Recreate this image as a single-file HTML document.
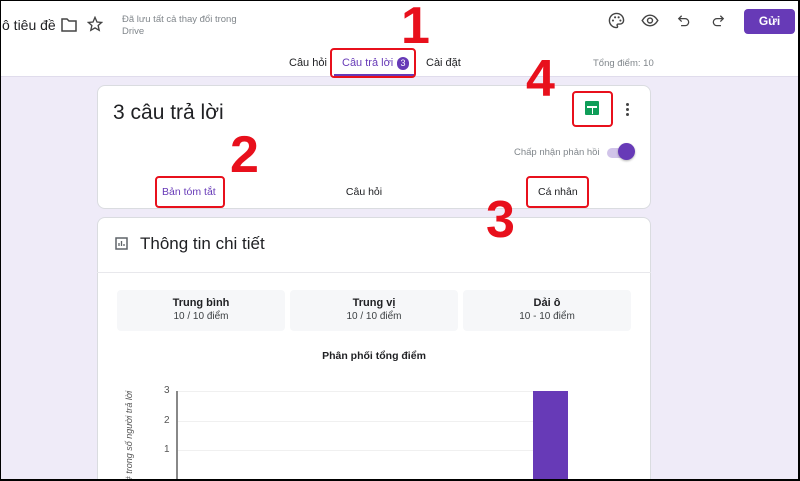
<!DOCTYPE html>
<html><head><meta charset="utf-8"><style>
*{margin:0;padding:0;box-sizing:border-box}
html{width:800px;height:481px;overflow:hidden}
body{width:800px;height:481px;overflow:hidden;position:relative;background:#efebf8;font-family:"Liberation Sans","Noto Sans CJK SC",sans-serif;color:#202124}
.a{position:absolute}
.hdr{left:0;top:0;width:800px;height:77px;background:#fff;border-bottom:1px solid #e0dcec}
.card{background:#fff;border-radius:8px;border:1px solid #dadce0}
.red{position:absolute;border:2px solid #e8101c;border-radius:4px}
.num{position:absolute;color:#e8101c;font-weight:bold;font-size:52px;line-height:1}
.box{position:absolute;top:290px;height:41px;background:#f6f7f9;border-radius:4px;text-align:center;font-size:10px}
.box b{display:block;margin-top:7px;font-size:11px}
.box span{display:block;color:#3c4043;margin-top:2px}
.ic{position:absolute;top:12px}
</style></head><body>
<div class="a hdr"></div>
<div class="a" style="left:2px;top:17px;font-size:14px">ô tiêu đề</div>
<svg class="a" style="left:61px;top:18px" width="16" height="14" viewBox="0 0 16 14"><path d="M1 1h5l2 2h7v10H1z" fill="none" stroke="#444" stroke-width="1.5"/></svg>
<svg class="a" style="left:87px;top:16px" width="16" height="16" viewBox="0 0 24 24"><path d="M12 2l3 7 7 .6-5.3 4.7 1.6 7.2L12 17.8 5.7 21.5l1.6-7.2L2 9.6 9 9z" fill="none" stroke="#444" stroke-width="2"/></svg>
<div class="a" style="left:122px;top:14px;font-size:9.5px;color:#80868b;line-height:12px">Đã lưu tất cả thay đổi trong<br>Drive</div>
<svg class="ic" style="left:608px" width="17" height="17" viewBox="0 0 24 24"><path d="M12 2C6.5 2 2 6.5 2 12s4.5 10 10 10c1 0 1.5-.7 1.5-1.5 0-.9-.7-1.2-.7-2 0-1 .8-1.5 1.7-1.5H17c2.8 0 5-2.2 5-5C22 6 17.5 2 12 2z" fill="none" stroke="#444" stroke-width="2"/><circle cx="7" cy="12" r="1.5" fill="#444"/><circle cx="10" cy="7.5" r="1.5" fill="#444"/><circle cx="15" cy="7.5" r="1.5" fill="#444"/><circle cx="17.5" cy="12" r="1.5" fill="#444"/></svg>
<svg class="ic" style="left:641px" width="18" height="17" viewBox="0 0 24 24"><path d="M1 12c3-5 7-7.5 11-7.5S20 7 23 12c-3 5-7 7.5-11 7.5S4 17 1 12z" fill="none" stroke="#444" stroke-width="2"/><circle cx="12" cy="12" r="3.5" fill="none" stroke="#444" stroke-width="2"/></svg>
<svg class="ic" style="left:677px;top:14px" width="14" height="14" viewBox="0 0 24 24"><path d="M8 3L3 8l5 5M3 8h11a6 6 0 0 1 0 12H7" fill="none" stroke="#444" stroke-width="2.2"/></svg>
<svg class="ic" style="left:711px;top:14px" width="14" height="14" viewBox="0 0 24 24"><path d="M16 3l5 5-5 5M21 8H10a6 6 0 0 0 0 12h7" fill="none" stroke="#444" stroke-width="2.2"/></svg>
<div class="a" style="left:744px;top:9px;width:51px;height:25px;background:#673ab7;border-radius:4px;color:#fff;font-weight:bold;font-size:12px;text-align:center;line-height:25px">Gửi</div>
<div class="a" style="left:289px;top:57px;font-size:11px">Câu hỏi</div>
<div class="a" style="left:342px;top:57px;font-size:11px;color:#673ab7">Câu trả lời</div>
<div class="a" style="left:397px;top:57px;width:12px;height:13px;border-radius:6px;background:#673ab7;color:#fff;font-size:9px;text-align:center;line-height:13px">3</div>
<div class="a" style="left:334px;top:74px;width:80px;height:3px;background:#673ab7"></div>
<div class="a" style="left:426px;top:57px;font-size:11px">Cài đặt</div>
<div class="a" style="left:593px;top:58px;font-size:9.5px;color:#80868b">Tổng điểm: 10</div>

<div class="a card" style="left:97px;top:85px;width:554px;height:124px"></div>
<div class="a" style="left:113px;top:101px;font-size:21px">3 câu trả lời</div>
<div class="a" style="left:585px;top:101px;width:14px;height:14px;background:#0f9d58;border-radius:1px"></div>
<div class="a" style="left:587px;top:106px;width:10px;height:1.5px;background:#fff"></div>
<div class="a" style="left:591.5px;top:106px;width:1.5px;height:8px;background:#fff"></div>
<div class="a" style="left:626px;top:103px;width:3px;height:3px;border-radius:2px;background:#444;box-shadow:0 5px 0 #444,0 10px 0 #444"></div>
<div class="a" style="left:514px;top:147px;font-size:9.5px;color:#80868b">Chấp nhận phản hồi</div>
<div class="a" style="left:607px;top:148px;width:26px;height:10px;border-radius:5px;background:#d1c4e9"></div>
<div class="a" style="left:618px;top:143px;width:17px;height:17px;border-radius:9px;background:#673ab7;box-shadow:0 1px 2px rgba(0,0,0,.3)"></div>
<div class="a" style="left:162px;top:186px;font-size:10.5px;color:#673ab7">Bản tóm tắt</div>
<div class="a" style="left:339px;top:186px;font-size:10.5px;width:50px;text-align:center">Câu hỏi</div>
<div class="a" style="left:538px;top:186px;font-size:10.5px">Cá nhân</div>

<div class="a card" style="left:97px;top:217px;width:554px;height:262px;border-bottom:none;border-radius:8px 8px 0 0"></div>
<div class="a" style="left:97px;top:272px;width:554px;height:1px;background:#e8e8ec"></div>
<svg class="a" style="left:115px;top:237px" width="13" height="13" viewBox="0 0 13 13"><rect x="1" y="1" width="11" height="11" fill="none" stroke="#5f6368" stroke-width="1.5"/><path d="M4 9V6M6.5 9V4M9 9V7" stroke="#5f6368" stroke-width="1.3"/></svg>
<div class="a" style="left:140px;top:234px;font-size:17px">Thông tin chi tiết</div>
<div class="box" style="left:117px;width:168px"><b>Trung bình</b><span>10 / 10 điểm</span></div>
<div class="box" style="left:290px;width:168px"><b>Trung vị</b><span>10 / 10 điểm</span></div>
<div class="box" style="left:463px;width:168px"><b>Dải ô</b><span>10 - 10 điểm</span></div>
<div class="a" style="left:274px;top:350px;width:200px;text-align:center;font-size:10.5px;font-weight:bold">Phân phối tổng điểm</div>
<div class="a" style="left:178px;top:391px;width:355px;height:1px;background:#f0f0f0"></div>
<div class="a" style="left:178px;top:421px;width:355px;height:1px;background:#f0f0f0"></div>
<div class="a" style="left:178px;top:450px;width:355px;height:1px;background:#f0f0f0"></div>
<div class="a" style="left:176px;top:391px;width:2px;height:90px;background:#888"></div>
<div class="a" style="left:164px;top:385px;font-size:10px;color:#555">3</div>
<div class="a" style="left:164px;top:415px;font-size:10px;color:#555">2</div>
<div class="a" style="left:164px;top:444px;font-size:10px;color:#555">1</div>
<div class="a" style="left:533px;top:391px;width:35px;height:90px;background:#673ab7"></div>
<div class="a" style="left:79px;top:431px;width:100px;transform:rotate(-90deg);font-size:9px;font-style:italic;color:#555;text-align:center;white-space:nowrap"># trong số người trả lời</div>

<div class="red" style="left:330px;top:48px;width:86px;height:30px"></div>
<div class="red" style="left:155px;top:176px;width:70px;height:32px"></div>
<div class="red" style="left:526px;top:176px;width:63px;height:32px"></div>
<div class="red" style="left:572px;top:91px;width:41px;height:36px"></div>
<div class="num" style="left:401px;top:0px">1</div>
<div class="num" style="left:230px;top:129px">2</div>
<div class="num" style="left:486px;top:194px">3</div>
<div class="num" style="left:526px;top:53px">4</div>

<div class="a" style="left:0;top:0;width:800px;height:1px;background:#000"></div>
<div class="a" style="left:0;top:479px;width:800px;height:2px;background:#000"></div>
<div class="a" style="left:0;top:0;width:1px;height:481px;background:#000"></div>
<div class="a" style="left:798px;top:0;width:2px;height:481px;background:#000"></div>
</body></html>
